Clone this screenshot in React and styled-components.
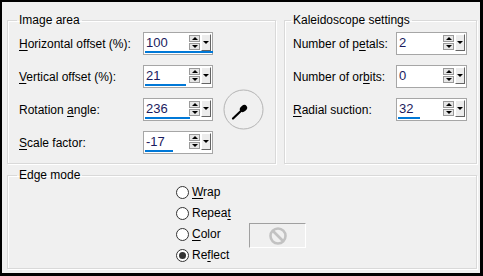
import { createGlobalStyle } from 'styled-components'
import styled from 'styled-components'

const GlobalStyle = createGlobalStyle`
  html, body {
    margin: 0;
    padding: 0;
    background: #000;
  }
  body {
    font-family: "Liberation Sans", Arial, sans-serif;
    font-size: 12px;
    color: #000;
  }
`

const Frame = styled.div`
  width: 483px;
  height: 276px;
  box-sizing: border-box;
  border-style: solid;
  border-color: #000;
  border-width: 2px 3px 3px 2px;
  background: #f0f0f0;
  padding: 10px 3px 0 5px;
  display: flex;
  flex-direction: column;
  gap: 3px;
`

const TopRow = styled.div`
  display: flex;
  gap: 8px;
`

const Group = styled.fieldset`
  margin: 0;
  box-sizing: border-box;
  width: ${(p) => p.$width}px;
  height: ${(p) => p.$height}px;
  border: 1px solid #d9d9d9;
  box-shadow: inset 1px 1px 0 #fff, 1px 1px 0 #fff;
  padding: ${(p) => p.$pad};
  min-width: 0;
`

const Legend = styled.legend`
  padding: 0 2px;
  margin-left: -2px;
  line-height: 16px;
  font-size: 12px;
`

const Key = styled.u`
  text-decoration: underline;
  text-underline-offset: 2px;
`

const FieldGrid = styled.div`
  display: grid;
  grid-template-columns: ${(p) => p.$cols};
  grid-auto-rows: 23px;
  row-gap: 10px;
  align-items: center;
`

const Label = styled.span`
  grid-column: 1;
  white-space: nowrap;
`

const SpinBox = styled.div`
  grid-column: 2;
  width: ${(p) => p.$w}px;
  height: 23px;
  box-sizing: border-box;
  border: 1px solid #a6a6a6;
  background: #fff;
  display: flex;
  flex-direction: column;
`

const SpinRow = styled.div`
  flex: 1;
  display: flex;
  align-items: flex-start;
  padding: 1px 1px 0 2px;
`

const Value = styled.span`
  flex: 1;
  font-size: 13px;
  line-height: 17px;
  color: #1b1b5e;
`

const Steppers = styled.div`
  display: flex;
  flex-direction: column;
  gap: 1px;
  margin-top: 1px;
  margin-right: 1px;
`

const Step = styled.div`
  width: 9px;
  height: 5px;
  border: 1px solid #9a9a9a;
  background: #e6e6e6;
  display: flex;
  align-items: center;
  justify-content: center;

  &::after {
    content: '';
    border-left: 3px solid transparent;
    border-right: 3px solid transparent;
    ${(p) => (p.$down ? 'border-top: 3px solid #000;' : 'border-bottom: 3px solid #000;')}
  }
`

const Drop = styled.div`
  width: 8px;
  height: 15px;
  border: 1px solid;
  border-color: #fff #646464 #646464 #fff;
  background: #ececec;
  display: flex;
  align-items: center;
  justify-content: center;

  &::after {
    content: '';
    border-left: 3px solid transparent;
    border-right: 3px solid transparent;
    border-top: 3px solid #000;
  }
`

const Bar = styled.div`
  height: 3px;
  margin: 0 1px 1px 1px;
  background: #0078d7;
`

const DialWrap = styled.div`
  grid-column: 3;
  grid-row: 2 / span 3;
  align-self: center;
  margin-left: 10px;
  width: 41px;
  height: 41px;
`

const EdgeGrid = styled.div`
  display: grid;
  grid-template-columns: 60px 57px;
  column-gap: 13px;
  grid-auto-rows: 18px;
  row-gap: 3px;
  align-items: center;
  margin-left: ${(p) => p.$indent}px;
`

const Radio = styled.label`
  grid-column: 1;
  display: flex;
  align-items: center;
  gap: 3px;
  white-space: nowrap;
`

const Circle = styled.span`
  width: 13px;
  height: 13px;
  box-sizing: border-box;
  border: 1px solid #333;
  border-radius: 50%;
  background: #fff;
  display: flex;
  align-items: center;
  justify-content: center;

  &::after {
    content: '';
    width: 7px;
    height: 7px;
    border-radius: 50%;
    background: ${(p) => (p.$on ? '#333' : 'transparent')};
  }
`

const Swatch = styled.div`
  grid-column: 2;
  grid-row: 3;
  align-self: center;
  margin-top: 3px;
  height: 25px;
  box-sizing: border-box;
  border: 1px solid;
  border-color: #a0a0a0 #fff #fff #a0a0a0;
  display: flex;
  align-items: center;
  justify-content: center;
`

function Spin({ value, min, max, width = 70 }) {
  const pct = Math.max(0, Math.min(1, (value - min) / (max - min))) * 100
  return (
    <SpinBox $w={width}>
      <SpinRow>
        <Value>{value}</Value>
        <Steppers>
          <Step />
          <Step $down />
        </Steppers>
        <Drop />
      </SpinRow>
      <Bar style={{ width: `${pct}%` }} />
    </SpinBox>
  )
}

const Dial = () => (
  <DialWrap>
    <svg width="41" height="41" viewBox="0 0 41 41">
      <circle cx="20.5" cy="20.5" r="19.5" fill="none" stroke="#b4b4b4" strokeWidth="1" />
      <line x1="20" y1="20" x2="10" y2="29.5" stroke="#000" strokeWidth="2.2" strokeLinecap="round" />
      <ellipse cx="20.5" cy="19.5" rx="4" ry="3" transform="rotate(-40 20.5 19.5)" fill="#000" />
    </svg>
  </DialWrap>
)

const NoColor = () => (
  <svg width="20" height="20" viewBox="0 0 20 20">
    <circle cx="10" cy="10" r="7.5" fill="none" stroke="#c2c2c2" strokeWidth="2.6" />
    <line x1="5" y1="5" x2="15" y2="15" stroke="#c2c2c2" strokeWidth="2.6" />
  </svg>
)

const edgeModes = [
  { pre: '', key: 'W', post: 'rap' },
  { pre: 'Repea', key: 't', post: '' },
  { pre: '', key: 'C', post: 'olor' },
  { pre: 'Re', key: 'f', post: 'lect', on: true }
]

export default function App() {
  return (
    <>
      <GlobalStyle />
      <Frame>
        <TopRow>
          <Group $width={269} $height={152} $pad="4px 0 0 11px">
            <Legend>Image area</Legend>
            <FieldGrid $cols="124px 70px 1fr">
              <Label><Key>H</Key>orizontal offset (%):</Label>
              <Spin value={100} min={-100} max={100} />
              <Label><Key>V</Key>ertical offset (%):</Label>
              <Spin value={21} min={-100} max={100} />
              <Label>Rotation <Key>a</Key>ngle:</Label>
              <Spin value={236} min={0} max={360} />
              <Label><Key>S</Key>cale factor:</Label>
              <Spin value={-17} min={-100} max={100} />
              <Dial />
            </FieldGrid>
          </Group>
          <Group $width={193} $height={152} $pad="4px 0 0 8px">
            <Legend>Kaleidoscope settings</Legend>
            <FieldGrid $cols="103px 71px">
              <Label>Number of p<Key>e</Key>tals:</Label>
              <Spin value={2} min={2} max={31} width={71} />
              <Label>Number of or<Key>b</Key>its:</Label>
              <Spin value={0} min={0} max={5} width={71} />
              <Label><Key>R</Key>adial suction:</Label>
              <Spin value={32} min={0} max={100} width={71} />
            </FieldGrid>
          </Group>
        </TopRow>
        <Group $width={470} $height={102} $pad="0 0 0 11px">
          <Legend>Edge mode</Legend>
          <EdgeGrid $indent={157}>
            {edgeModes.map((m) => (
              <Radio key={m.pre + m.key}>
                <Circle $on={m.on} />
                <span>{m.pre}<Key>{m.key}</Key>{m.post}</span>
              </Radio>
            ))}
            <Swatch>
              <NoColor />
            </Swatch>
          </EdgeGrid>
        </Group>
      </Frame>
    </>
  )
}
